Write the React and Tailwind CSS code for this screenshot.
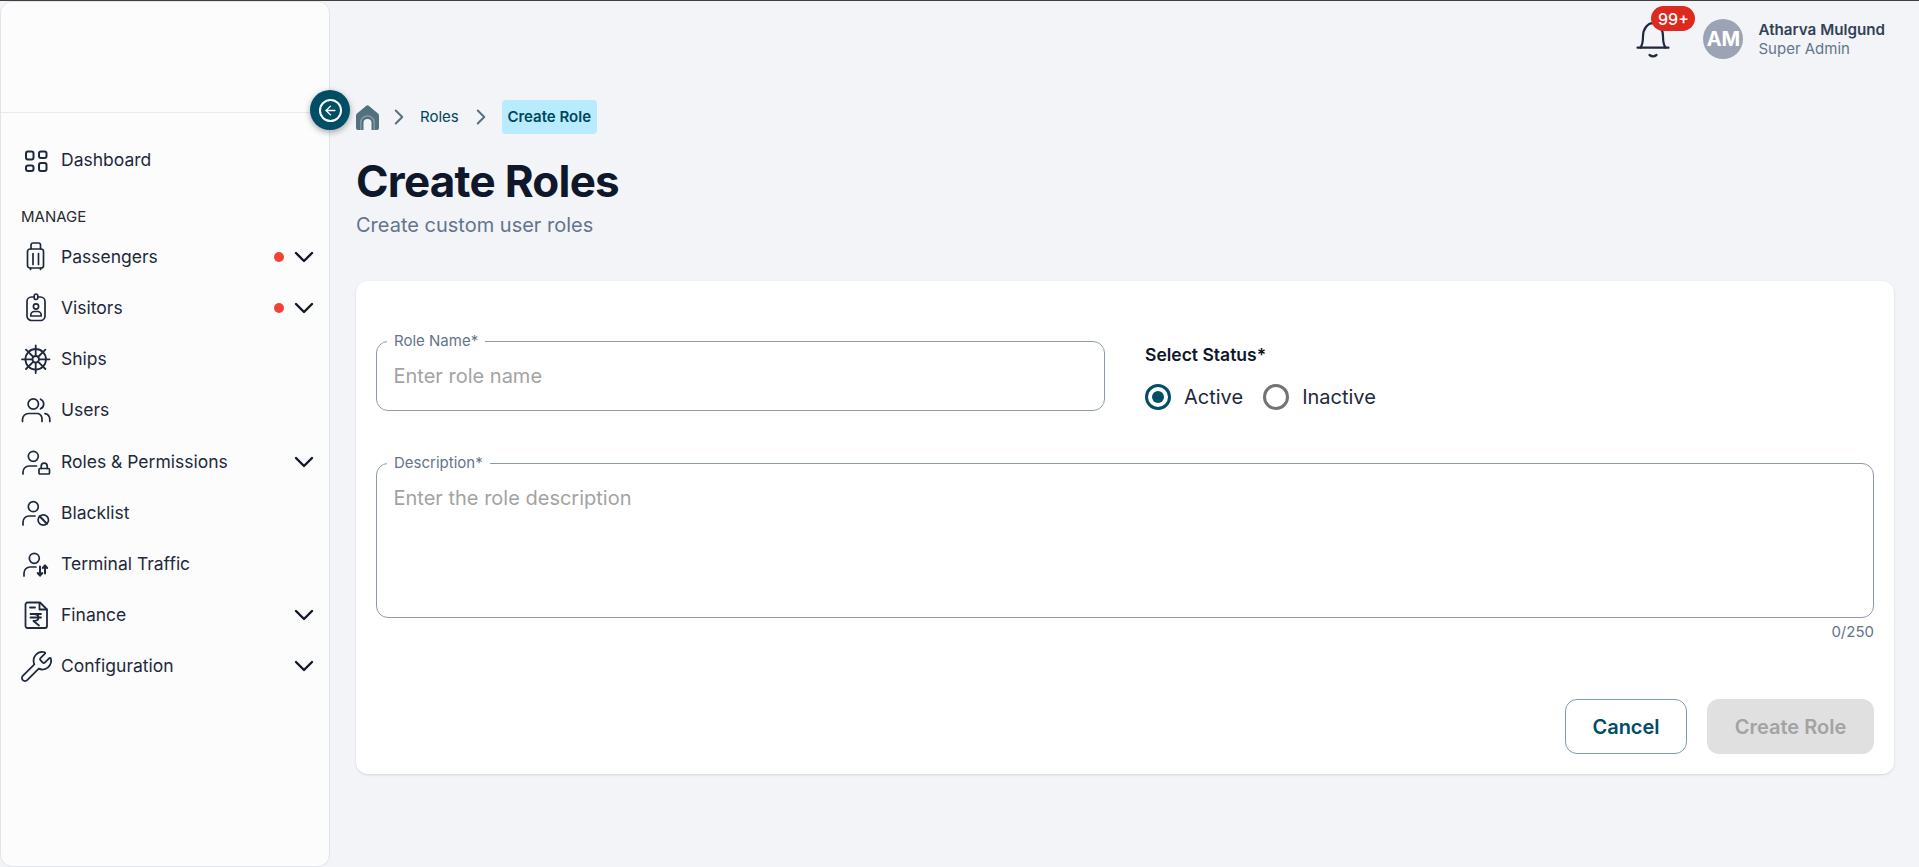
import React from "react";
import { ChevronDown, ChevronRight, ArrowLeft, Wrench } from "lucide-react";

const ink = "#1e293b";

const Icon = ({ children, sw = 1.7 }) => (
  <svg width="30" height="30" viewBox="0 0 30 30" fill="none" stroke={ink} strokeWidth={sw} strokeLinecap="round" strokeLinejoin="round">
    {children}
  </svg>
);

const DashIcon = () => (
  <Icon sw={2}>
    <rect x="5" y="6.500" width="7.500" height="8" rx="2" />
    <rect x="18" y="6.500" width="7.500" height="6.500" rx="2" />
    <rect x="5" y="20.500" width="7.500" height="5.500" rx="2" />
    <rect x="18" y="18" width="7.500" height="8" rx="2" />
  </Icon>
);

const LuggageIcon = () => (
  <Icon>
    <rect x="6.500" y="7" width="16" height="19" rx="2.500" />
    <path d="M10 7V3a2 2 0 0 1 2-2h5.500a2 2 0 0 1 2 2v4M12 11.500v11M17.500 11.500v11M9.500 26v1.500M19.500 26v1.500" />
  </Icon>
);

const IdBadge = () => (
  <Icon>
    <rect x="6" y="4" width="18" height="23.500" rx="4.500" />
    <rect x="13.200" y="1" width="3.600" height="5.500" rx="1.800" fill="#fcfcfd" />
    <circle cx="15" cy="13.500" r="2.600" />
    <path d="M9.800 23v-1a3.500 3.500 0 0 1 3.500-3.500h3.400a3.500 3.500 0 0 1 3.500 3.500v1z" />
  </Icon>
);

const ShipWheel = () => (
  <Icon sw={1.800}>
    <circle cx="14.700" cy="15.300" r="10.300" />
    <circle cx="14.700" cy="15.300" r="3.300" />
    <path d="M14.700 1.500v10.500M14.700 18.600v10.500M1 15.300h10.400M18 15.300h10.500M5 5.600l7.400 7.400M17 17.600l7.400 7.400M24.400 5.600l-7.400 7.400M12.400 17.600l-7.400 7.400" />
  </Icon>
);

const UsersIcon = () => (
  <Icon>
    <circle cx="12.300" cy="9" r="5.200" />
    <path d="M19.500 4.200a5.200 5.200 0 0 1 0 9.600" />
    <path d="M1.500 26.500v-2a6 6 0 0 1 6-6h9.500a6 6 0 0 1 4 6v2" />
    <path d="M24 18.700a6 6 0 0 1 4.800 5.800v2" />
  </Icon>
);

const PersonLock = () => (
  <Icon>
    <circle cx="12.300" cy="9.300" r="5" />
    <path d="M2 27v-2a6 6 0 0 1 6-6h7.500" />
    <rect x="18" y="21.500" width="10.500" height="5.500" rx="1" />
    <path d="M20.200 21.500v-2.300a3 3 0 0 1 6 0v2.300" />
  </Icon>
);

const PersonBlock = () => (
  <Icon>
    <circle cx="12.300" cy="8.700" r="5" />
    <path d="M2 27v-3a6 6 0 0 1 6-6h6" />
    <circle cx="22.300" cy="22" r="5.200" />
    <path strokeWidth="2" d="M18.700 18.300l7.200 7.400" />
  </Icon>
);

const PersonTraffic = () => (
  <Icon>
    <circle cx="13.300" cy="9.300" r="5" />
    <path d="M3 27v-3a6 6 0 0 1 6-6h6" />
    <path strokeWidth="2" d="M19 17.500v9M16.700 24l2.300 2.700 2.300-2.700M24 24.500v-8M21.800 19l2.200-2.700 2.200 2.700" />
  </Icon>
);

const RupeeDoc = () => (
  <Icon sw={1.800}>
    <path d="M6.500 2.500h12.500l7 7v16.500a2 2 0 0 1-2 2H6.500a2 2 0 0 1-2-2V4.500a2 2 0 0 1 2-2z" />
    <path d="M18.500 2.800v6.700h7.200M9 7.500h5" />
    <path d="M9.500 14h10.500M9.500 17.500h10.500M13 14c3 0 4.500 1.500 4.500 3.500s-2 3.500-5 3.500l5.500 4.500" />
  </Icon>
);

const BellIcon = () => (
  <svg width="34" height="38" viewBox="0 0 34 38" fill="none" stroke="#1e293b" strokeWidth="2.200" strokeLinecap="round" strokeLinejoin="round">
    <path d="M4.500 26.700c2-3 2.500-6 2.500-11.500a10 13 0 0 1 20 0c0 5.500.5 8.500 2.500 11.500" />
    <path d="M1.500 26.700h31" />
    <path d="M13.500 34c2 1.500 5 1.500 7 0" />
  </svg>
);

const HomeIcon = () => (
  <svg width="23" height="25" viewBox="0 0 23 25" className="shrink-0">
    <path fill="#54707f" d="M10 1 a2.300 2.300 0 0 1 3 0 L22 8.500 a2.500 2.500 0 0 1 1 2 V23 a2 2 0 0 1 -2 2 H2 a2 2 0 0 1 -2 -2 V10.500 a2.500 2.500 0 0 1 1 -2 Z" />
    <path fill="none" stroke="#8ca0ab" strokeWidth="1.200" d="M4.800 25 V17.500 a6.700 6.700 0 0 1 13.400 0 V25" />
    <path fill="#f2f4f8" d="M7.500 25 V18 a4 4 0 0 1 8 0 V25 Z" />
  </svg>
);

const Row = ({ icon, label, dot, chevron }) => (
  <div className="flex h-[51.200px] items-center pr-[9px] pl-[20px]">
    <span className="flex h-[30px] w-[30px] shrink-0 items-center justify-center">{icon}</span>
    <span className="ml-[10px] flex-1 text-[17.500px] leading-6 text-[#1e293b]">{label}</span>
    {dot && <span className="mr-[4px] h-[10px] w-[10px] rounded-full bg-[#f44336]" />}
    {chevron && <ChevronDown size={32} strokeWidth={1.800} color="#0f172a" />}
  </div>
);

const Sidebar = () => (
  <aside className="relative z-10 flex w-[330px] shrink-0 flex-col rounded-xl border border-[#e2e4e9] bg-[#fcfcfd]">
    <div className="h-[111px] shrink-0 border-b border-[#e8eaf0]" />
    <div className="pt-[21.500px]">
      <Row label="Dashboard" icon={<DashIcon />} />
      <div className="mt-[21px] pl-[20px] text-[15px] leading-5 text-[#262b33]">MANAGE</div>
      <div className="mt-[4.500px]">
        <Row label="Passengers" dot chevron icon={<LuggageIcon />} />
        <Row label="Visitors" dot chevron icon={<IdBadge />} />
        <Row label="Ships" icon={<ShipWheel />} />
        <Row label="Users" icon={<UsersIcon />} />
        <Row label="Roles & Permissions" chevron icon={<PersonLock />} />
        <Row label="Blacklist" icon={<PersonBlock />} />
        <Row label="Terminal Traffic" icon={<PersonTraffic />} />
        <Row label="Finance" chevron icon={<RupeeDoc />} />
        <Row label="Configuration" chevron icon={<Wrench size={35} strokeWidth={1.200} color={ink} className="shrink-0" />} />
      </div>
    </div>
    <button className="absolute top-[88px] right-[-21px] flex h-10 w-10 items-center justify-center rounded-full bg-[#004d66] shadow-[0_2px_6px_rgba(0,0,0,0.35)]">
      <span className="flex h-[23px] w-[23px] items-center justify-center rounded-full border-2 border-white">
        <ArrowLeft size={15} strokeWidth={2.200} color="#fff" />
      </span>
    </button>
  </aside>
);

const TopBar = () => (
  <div className="flex h-[99px] items-start justify-end pt-[18px] pr-[34px]">
    <div className="relative mt-[2px] mr-[33px] h-[38px] w-[34px]">
      <BellIcon />
      <span className="absolute top-[-15px] left-[15px] flex h-[25px] w-[44px] items-center justify-center rounded-full bg-[#dc2a1e] text-[16px] font-medium text-white">99+</span>
    </div>
    <div className="flex h-10 w-10 items-center justify-center rounded-full bg-[#9ca3b4] text-[20px] font-bold text-white">AM</div>
    <div className="ml-[15px] flex flex-col pt-[1px]">
      <span className="text-[15.200px] leading-[19px] font-semibold text-[#334155]">Atharva Mulgund</span>
      <span className="text-[15px] leading-[19px] text-[#64748b]">Super Admin</span>
    </div>
  </div>
);

const Breadcrumb = () => (
  <div className="flex h-[34px] items-center">
    <HomeIcon />
    <ChevronRight size={26} strokeWidth={1.800} color="#54707f" className="ml-[7px] shrink-0" />
    <span className="ml-[8px] pt-[1px] text-[15px] text-[#00465c]">Roles</span>
    <ChevronRight size={26} strokeWidth={1.800} color="#54707f" className="ml-[9px] shrink-0" />
    <span className="ml-[8px] flex h-[34px] w-[95px] items-center justify-center rounded-sm bg-[#b9ebff] pt-[1px] text-[15px] font-semibold text-[#00465c]">Create Role</span>
  </div>
);

const Field = ({ label, children, className }) => (
  <div className={`relative rounded-xl border border-[#8e9aab] ${className}`}>
    <span className="absolute top-[-10px] left-[10px] bg-white px-[7px] text-[15px] leading-[18px] text-[#64748b]">{label}</span>
    {children}
  </div>
);

const Radio = ({ label, checked }) => (
  <label className="flex items-center gap-[13px]">
    <span className={`flex h-[26px] w-[26px] items-center justify-center rounded-full border-[3px] ${checked ? "border-[#004d66]" : "border-[#737373]"}`}>
      {checked && <span className="h-[12px] w-[12px] rounded-full bg-[#004d66]" />}
    </span>
    <span className="text-[20px] leading-6 text-[#1e293b]">{label}</span>
  </label>
);

const FormCard = () => (
  <div className="mt-[42px] h-[493px] rounded-xl bg-white px-[20px] shadow-sm">
    <div className="flex pt-[60px]">
      <Field label="Role Name*" className="h-[70px] w-[729px]">
        <input readOnly placeholder="Enter role name" className="h-full w-full bg-transparent px-[16.500px] text-[20px] outline-none placeholder:text-[#a3a3a3]" />
      </Field>
      <div className="ml-[40px]">
        <div className="pt-[2px] text-[17.500px] leading-6 font-semibold text-[#0f172a]">Select Status*</div>
        <div className="mt-[16.500px] flex gap-[20px]">
          <Radio label="Active" checked />
          <Radio label="Inactive" />
        </div>
      </div>
    </div>
    <Field label="Description*" className="mt-[52px] h-[155px]">
      <textarea readOnly placeholder="Enter the role description" className="block h-full w-full resize-none bg-transparent px-[16.500px] pt-[20px] text-[20px] leading-7 outline-none placeholder:text-[#a3a3a3]" />
    </Field>
    <div className="mt-[4px] text-right text-[15px] leading-5 text-[#64748b]">0/250</div>
    <div className="mt-[57px] flex justify-end gap-[20px]">
      <button className="h-[55px] w-[122px] rounded-xl border border-[#7c9cab] text-[20px] font-semibold text-[#004d66]">Cancel</button>
      <button className="h-[55px] w-[167px] rounded-xl bg-[#e0e0e0] text-[20px] font-semibold text-[#a3a3a3]">Create Role</button>
    </div>
  </div>
);

export default function App() {
  return (
    <div className="flex h-[867px] w-[1919px] overflow-hidden border-t border-[#3f3f3f] bg-[#f2f4f8] font-['Inter',sans-serif]">
      <Sidebar />
      <main className="flex-1 overflow-hidden">
        <TopBar />
        <div className="pr-[25px] pl-[26px]">
          <Breadcrumb />
          <h1 className="mt-[19px] text-[44px] leading-[56px] font-bold tracking-[-0.75px] text-[#0f172a]">Create Roles</h1>
          <p className="mt-[2px] text-[20px] leading-7 text-[#64748b]">Create custom user roles</p>
          <FormCard />
        </div>
      </main>
    </div>
  );
}
